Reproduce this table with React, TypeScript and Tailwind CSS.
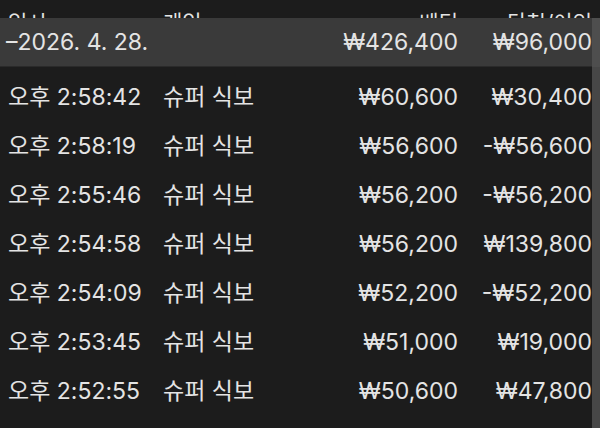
const rows = [
  { time: '오후 2:58:42', name: '슈퍼 식보', amount: '₩60,600', net: '₩30,400' },
  { time: '오후 2:58:19', name: '슈퍼 식보', amount: '₩56,600', net: '-₩56,600' },
  { time: '오후 2:55:46', name: '슈퍼 식보', amount: '₩56,200', net: '-₩56,200' },
  { time: '오후 2:54:58', name: '슈퍼 식보', amount: '₩56,200', net: '₩139,800' },
  { time: '오후 2:54:09', name: '슈퍼 식보', amount: '₩52,200', net: '-₩52,200' },
  { time: '오후 2:53:45', name: '슈퍼 식보', amount: '₩51,000', net: '₩19,000' },
  { time: '오후 2:52:55', name: '슈퍼 식보', amount: '₩50,600', net: '₩47,800' },
];

export default function App() {
  return (
    <div
      className="w-[600px] h-[428px] overflow-hidden bg-[#1c1c1c] text-[#e4e4e4] text-[23px] leading-none flex flex-col"
      style={{ fontFamily: '"Inter", "Noto Sans CJK KR", sans-serif' }}
    >
      {/* header, scrolled almost out of view */}
      <div className="h-[18px] flex items-end pr-[8px] overflow-hidden shrink-0">
        <div className="flex w-full items-end -mb-[15px] text-[21px]">
          <span className="w-[163px] pl-[8px]">일시</span>
          <span className="w-[100px]">게임</span>
          <span className="flex-1 text-right">베팅</span>
          <span className="w-[134px] text-right">당첨/이익</span>
        </div>
      </div>

      <div className="flex flex-1 min-h-0">
        <div className="flex-1 flex flex-col">
          <div className="h-[49px] bg-[#3a3a3a] border-b border-[#2a2a2a] flex items-center shrink-0">
            <span className="flex-1 pl-[6px]">–2026. 4. 28.</span>
            <span className="text-right">₩426,400</span>
            <span className="w-[134px] text-right">₩96,000</span>
          </div>
          <div className="flex flex-col pt-[6px]">
            {rows.map((r, i) => (
              <div key={i} className="h-[49px] flex items-center shrink-0">
                <span className="w-[163px] pl-[8px]">{r.time}</span>
                <span className="flex-1">{r.name}</span>
                <span className="text-right">{r.amount}</span>
                <span className="w-[134px] text-right">{r.net}</span>
              </div>
            ))}
          </div>
        </div>
        {/* scrollbar track */}
        <div className="w-[8px] flex flex-col shrink-0">
          <div className="h-[49px] bg-[#4e4e4e]" />
          <div className="flex-1 bg-[#474747]" />
        </div>
      </div>
    </div>
  );
}
